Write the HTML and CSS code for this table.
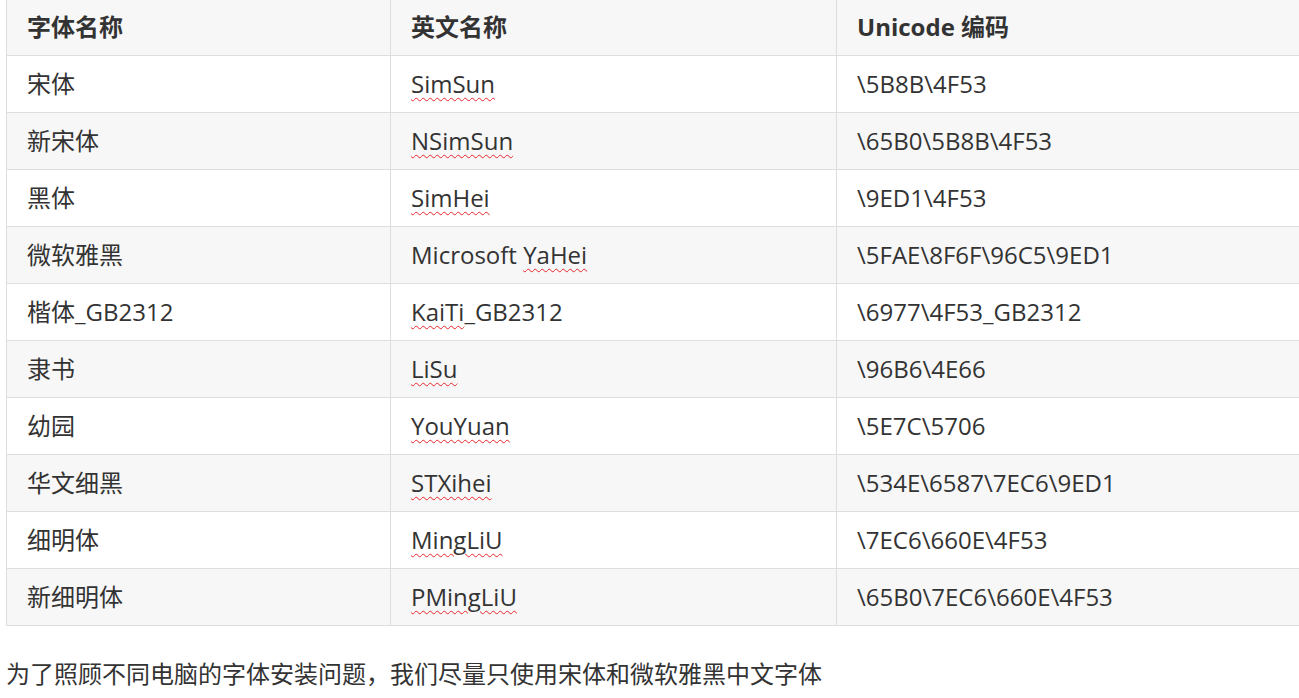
FILE: index.html
```html
<!DOCTYPE html>
<html lang="zh-CN">
<head>
<meta charset="utf-8">
<title>字体名称</title>
<link rel="stylesheet" href="styles.css">
</head>
<body>
<table class="font-table">
  <thead>
    <tr><th class="c1">字体名称</th><th class="c2">英文名称</th><th class="c3">Unicode 编码</th></tr>
  </thead>
  <tbody>
    <tr><td>宋体</td><td><span class="sp">SimSun</span></td><td>\5B8B\4F53</td></tr>
    <tr><td>新宋体</td><td><span class="sp">NSimSun</span></td><td>\65B0\5B8B\4F53</td></tr>
    <tr><td>黑体</td><td><span class="sp">SimHei</span></td><td>\9ED1\4F53</td></tr>
    <tr><td>微软雅黑</td><td>Microsoft <span class="sp">YaHei</span></td><td>\5FAE\8F6F\96C5\9ED1</td></tr>
    <tr><td>楷体_GB2312</td><td><span class="sp">KaiTi</span>_GB2312</td><td>\6977\4F53_GB2312</td></tr>
    <tr><td>隶书</td><td><span class="sp">LiSu</span></td><td>\96B6\4E66</td></tr>
    <tr><td>幼园</td><td><span class="sp">YouYuan</span></td><td>\5E7C\5706</td></tr>
    <tr><td>华文细黑</td><td><span class="sp">STXihei</span></td><td>\534E\6587\7EC6\9ED1</td></tr>
    <tr><td>细明体</td><td><span class="sp">MingLiU</span></td><td>\7EC6\660E\4F53</td></tr>
    <tr><td>新细明体</td><td><span class="sp">PMingLiU</span></td><td>\65B0\7EC6\660E\4F53</td></tr>
  </tbody>
</table>
<p class="note">为了照顾不同电脑的字体安装问题，我们尽量只使用宋体和微软雅黑中文字体</p>
</body>
</html>
```
FILE: styles.css
```css
html, body {
  margin: 0;
  padding: 0;
  background: #ffffff;
  overflow: hidden;
}
body {
  padding-left: 6px;
  font-family: "Open Sans", "Noto Sans CJK SC", sans-serif;
  color: #333333;
  width: 1320px;
}
.font-table {
  border-collapse: collapse;
  width: 1310px;
  margin-top: -1px;
  font-size: 24px;
  table-layout: fixed;
}
.font-table th,
.font-table td {
  border: 1px solid #dedede;
  text-align: left;
  padding: 0 20px;
  height: 57px;
  box-sizing: border-box;
  vertical-align: middle;
  line-height: 30px;
}
.font-table th {
  font-weight: 700;
  height: 56px;
  padding-bottom: 2px;
}
.c1 { width: 384px; }
.c2 { width: 446px; }
.font-table thead tr,
.font-table tbody tr:nth-child(even) {
  background: #f7f7f7;
}
.sp {
  text-decoration: underline wavy #e8262a;
  text-decoration-thickness: 1px;
  text-underline-offset: 4px;
}
.note {
  margin: 32px 0 0 0;
  font-family: "Noto Sans CJK SC", sans-serif;
  font-size: 24px;
  line-height: 30px;
  color: #333333;
}
```
